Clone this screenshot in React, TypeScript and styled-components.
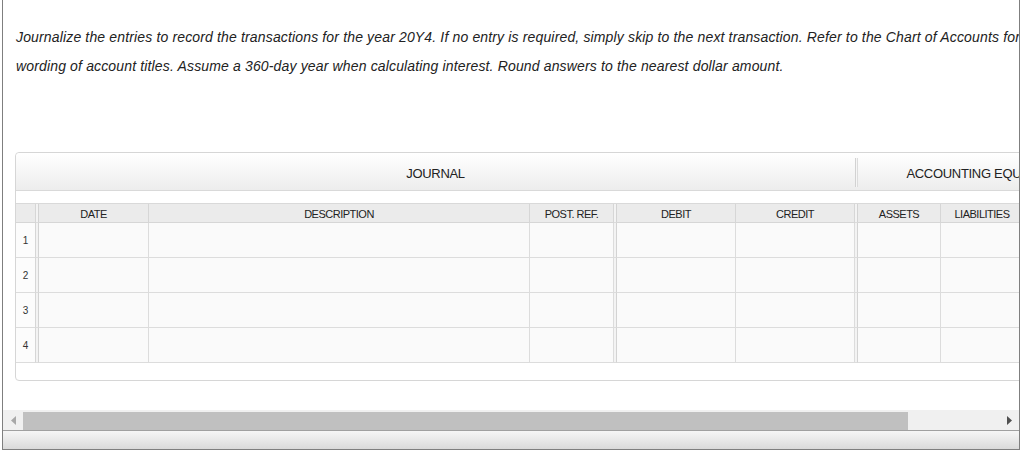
import React from "react";
import styled, { createGlobalStyle } from "styled-components";

const Global = createGlobalStyle`
  html, body { margin: 0; padding: 0; background: #fff; }
  body { font-family: "Liberation Sans", Arial, sans-serif; }
  * { box-sizing: border-box; }
`;

const Frame = styled.div`
  margin-left: 2px;
  width: 1018px;
  height: 450px;
  border-left: 1px solid #7f7f7f;
  border-right: 1px solid #7f7f7f;
  border-bottom: 1px solid #7f7f7f;
  display: flex;
  flex-direction: column;
  overflow: hidden;
`;

const Viewport = styled.div`
  height: 410px;
  overflow: hidden;
`;

const Content = styled.div`
  width: 1500px;
`;

const Instructions = styled.p`
  margin: 0;
  padding: 23px 0 0 13px;
  width: 1070px;
  font-family: "Liberation Sans", Arial, sans-serif;
  font-style: italic;
  font-size: 14px;
  letter-spacing: 0.15px;
  line-height: 29px;
  color: #222;
`;

const Panel = styled.div`
  margin: 71px 0 0 12px;
  width: 1400px;
  height: 229px;
  border: 1px solid #d6d6d6;
  border-radius: 4px;
  background: #fff;
  font-family: "Liberation Sans", Arial, sans-serif;
  color: #222;
`;

const Band = styled.div`
  height: 38px;
  display: flex;
  align-items: center;
  background: linear-gradient(#ffffff, #ededed);
  border-bottom: 1px solid #d9d9d9;
  border-radius: 4px 4px 0 0;
`;

const BandSection = styled.div<{ $w: number }>`
  width: ${(p) => p.$w}px;
  text-align: center;
  font-size: 13px;
  letter-spacing: -0.3px;
  padding-top: 3px;
`;

const BandDivider = styled.div`
  width: 3px;
  height: 29px;
  margin-top: 2px;
  border-left: 1px solid #d2d2d2;
  border-right: 1px solid #dcdcdc;
  background: #f6f6f6;
`;

const Spacer = styled.div`
  height: 12px;
`;

const cols = "20px 3px 110px 381px 84px 3px 119px 119px 3px 83px 83px 83px";

const Grid = styled.div`
  display: grid;
  grid-template-columns: ${cols};
  border-top: 1px solid #d9d9d9;
`;

const HeadCell = styled.div`
  height: 19px;
  background: #ebebeb;
  border-right: 1px solid #d6d6d6;
  border-bottom: 1px solid #d6d6d6;
  font-size: 11px;
  letter-spacing: -0.5px;
  line-height: 20px;
  text-align: center;
  color: #222;
  white-space: nowrap;
  overflow: hidden;
`;

const Sep = styled.div<{ $head?: boolean }>`
  height: ${(p) => (p.$head ? 19 : 35)}px;
  background: #f3f3f3;
  border-right: 1px solid #d3d3d3;
  border-bottom: 1px solid #dcdcdc;
`;

const NumCell = styled.div`
  height: 35px;
  background: #fcfcfc;
  border-right: 1px solid #d6d6d6;
  border-bottom: 1px solid #dcdcdc;
  font-family: "Liberation Sans", Arial, sans-serif;
  font-size: 10px;
  line-height: 36px;
  text-align: center;
  color: #333;
`;

const Cell = styled.div`
  height: 35px;
  background: #fafafa;
  border-right: 1px solid #dcdcdc;
  border-bottom: 1px solid #dcdcdc;
`;

const ScrollBar = styled.div`
  height: 20px;
  background: #f0f0f0;
  display: flex;
  align-items: center;
`;

const ArrowBtn = styled.div`
  width: 20px;
  height: 20px;
  display: flex;
  align-items: center;
  justify-content: center;
  flex: none;
`;

const Track = styled.div`
  flex: 1;
  display: flex;
  align-items: center;
  height: 100%;
`;

const Thumb = styled.div`
  width: 885px;
  height: 18px;
  margin-top: 1px;
  background: #c0c0c0;
`;

const BottomBar = styled.div`
  height: 19px;
  border-top: 1px solid #a0a0a0;
  background: linear-gradient(#f6f6f6, #dadada);
`;

const rows = [1, 2, 3, 4];

export default function App() {
  return (
    <>
      <Global />
      <Frame>
        <Viewport>
          <Content>
            <Instructions>
              Journalize the entries to record the transactions for the year 20Y4. If no entry is required, simply skip to the next transaction. Refer to the Chart of Accounts for the wording of account titles. Assume a 360-day year when calculating interest. Round answers to the nearest dollar amount.
            </Instructions>
            <Panel>
              <Band>
                <BandSection $w={839}>JOURNAL</BandSection>
                <BandDivider />
                <BandSection $w={249}>ACCOUNTING EQUATION</BandSection>
              </Band>
              <Spacer />
              <Grid>
                <HeadCell />
                <Sep $head />
                <HeadCell>DATE</HeadCell>
                <HeadCell>DESCRIPTION</HeadCell>
                <HeadCell>POST. REF.</HeadCell>
                <Sep $head />
                <HeadCell>DEBIT</HeadCell>
                <HeadCell>CREDIT</HeadCell>
                <Sep $head />
                <HeadCell>ASSETS</HeadCell>
                <HeadCell>LIABILITIES</HeadCell>
                <HeadCell>EQUITY</HeadCell>
                {rows.map((r) => (
                  <React.Fragment key={r}>
                    <NumCell>{r}</NumCell>
                    <Sep />
                    <Cell />
                    <Cell />
                    <Cell />
                    <Sep />
                    <Cell />
                    <Cell />
                    <Sep />
                    <Cell />
                    <Cell />
                    <Cell />
                  </React.Fragment>
                ))}
              </Grid>
            </Panel>
          </Content>
        </Viewport>
        <ScrollBar>
          <ArrowBtn>
            <svg width="5" height="9" viewBox="0 0 5 9">
              <path d="M5 0 L0 4.5 L5 9 Z" fill="#a8a8a8" />
            </svg>
          </ArrowBtn>
          <Track>
            <Thumb />
          </Track>
          <ArrowBtn>
            <svg width="5" height="9" viewBox="0 0 5 9">
              <path d="M0 0 L5 4.5 L0 9 Z" fill="#505050" />
            </svg>
          </ArrowBtn>
        </ScrollBar>
        <BottomBar />
      </Frame>
    </>
  );
}
